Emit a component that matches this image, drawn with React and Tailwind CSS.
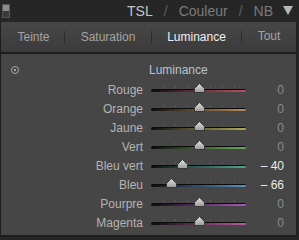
import React from 'react';

const rows = [
  { name: 'Rouge', value: 0, track: 'bg-[linear-gradient(to_right,#0c0c0c,#5a2a30_40%,#b8505e)]' },
  { name: 'Orange', value: 0, track: 'bg-[linear-gradient(to_right,#0c0c0c,#5a4530_40%,#b88c5c)]' },
  { name: 'Jaune', value: 0, track: 'bg-[linear-gradient(to_right,#0c0c0c,#55502a_40%,#b0a858)]' },
  { name: 'Vert', value: 0, track: 'bg-[linear-gradient(to_right,#0c0c0c,#35502a_40%,#6aab5a)]' },
  { name: 'Bleu vert', value: -40, track: 'bg-[linear-gradient(to_right,#0c0c0c,#2a5048_40%,#4aa690)]' },
  { name: 'Bleu', value: -66, track: 'bg-[linear-gradient(to_right,#0c0c0c,#2a4258_40%,#5a90b8)]' },
  { name: 'Pourpre', value: 0, track: 'bg-[linear-gradient(to_right,#0c0c0c,#4a2a55_40%,#a85ab8)]' },
  { name: 'Magenta', value: 0, track: 'bg-[linear-gradient(to_right,#0c0c0c,#552a4a_40%,#b85a9c)]' },
];

function Thumb() {
  return (
    <svg width="11" height="10" viewBox="0 0 11 10">
      <defs>
        <linearGradient id="tg" x1="0" y1="0" x2="0" y2="1">
          <stop offset="0" stopColor="#e0e0e0" />
          <stop offset="1" stopColor="#9a9a9a" />
        </linearGradient>
      </defs>
      <path d="M5.5 0.5 L10.5 5.5 L10.5 9.5 L0.5 9.5 L0.5 5.5 Z" fill="url(#tg)" stroke="#2a2a2a" strokeWidth="0.8" />
    </svg>
  );
}

function Slider({ row }) {
  const left = 48 + row.value * 0.42;
  return (
    <div className="relative w-[95px] h-[10px]">
      {[12, 24, 36, 59, 71, 83].map((t) => (
        <div key={t} className="absolute top-[1px] w-px h-[2px] bg-[#5a5a5a]" style={{ left: t }} />
      ))}
      <div className={`absolute left-0 right-0 top-[4px] h-[3px] rounded-full border-t border-[#0c0c0c] ${row.track}`} />
      <div className="absolute top-[-2px]" style={{ left: left - 5.5 }}>
        <Thumb />
      </div>
    </div>
  );
}

export default function App() {
  return (
    <div className="w-[299px] h-[240px] bg-[#262626] overflow-hidden font-['Liberation_Sans',Arial,sans-serif]">
      {/* header */}
      <div className="h-[21px] flex items-center justify-between pl-[2px] pr-[6px]">
        <div className="w-[8px] h-[14px] border border-[#555] bg-[#3a3a3a] flex flex-col">
          <div className="h-[6px] bg-[#8c8c8c]" />
        </div>
        <div className="flex items-center text-[14px] leading-none">
          <span className="text-[#c4c4c4]">TSL</span>
          <span className="text-[#5e5e5e] mx-[11px]">/</span>
          <span className="text-[#7a7a7a]">Couleur</span>
          <span className="text-[#5e5e5e] mx-[11px]">/</span>
          <span className="text-[#7a7a7a]">NB</span>
          <svg width="10" height="9" viewBox="0 0 10 9" className="ml-[10px]">
            <path d="M0 0 L10 0 L5 9 Z" fill="#b8b8b8" />
          </svg>
        </div>
      </div>

      <div className="w-[297px] border-l border-r border-[#1e1e1e]">
        {/* tabs */}
        <div className="h-[32px] mt-[1px] bg-[linear-gradient(#474747,#3b3b3b)] flex items-center text-[12px] border-b-2 border-[#1e1e1e]">
          <span className="w-[63px] text-center text-[#a4a4a4] pl-[2px]">Teinte</span>
          <span className="w-px h-[12px] bg-[#2c2c2c]" />
          <span className="w-[86px] text-center text-[#a4a4a4]">Saturation</span>
          <span className="w-px h-[12px] bg-[#2c2c2c]" />
          <span className="w-[89px] text-center text-[#f0f0f0]">Luminance</span>
          <span className="w-px h-[12px] bg-[#2c2c2c]" />
          <span className="flex-1 text-center text-[#a4a4a4] -mt-[3px]">Tout</span>
        </div>

        {/* content */}
        <div className="h-[183px] bg-[#464646] border-b-2 border-[#1e1e1e] pt-[9px] relative">
          <div className="flex items-center h-[14px]">
            <div className="ml-[10px] w-[8px] h-[8px] rounded-full border border-[#a8a8a8] flex items-center justify-center">
              <div className="w-[2px] h-[2px] bg-[#c8c8c8] rounded-full" />
            </div>
            <span className="ml-[130px] text-[12px] text-[#b8c4d0]">Luminance</span>
          </div>
          <div className="mt-[3px] flex flex-col">
            {rows.map((row) => (
              <div key={row.name} className="h-[19px] flex items-center text-[12px]">
                <span className="w-[142px] text-right text-[#b4b4b4]">{row.name}</span>
                <div className="ml-[8px]">
                  <Slider row={row} />
                </div>
                <span className={`w-[38px] text-right ${row.value === 0 ? 'text-[#8c8c8c]' : 'text-[#ececec]'}`}>
                  {row.value === 0 ? '0' : `– ${Math.abs(row.value)}`}
                </span>
              </div>
            ))}
          </div>
        </div>
      </div>
    </div>
  );
}
